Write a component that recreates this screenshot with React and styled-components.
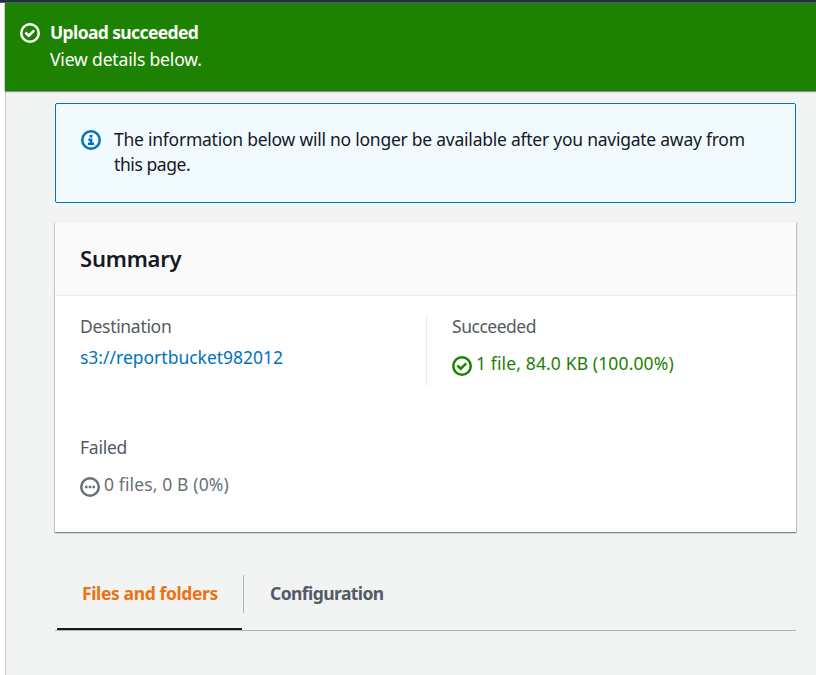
import React from "react";
import styled, { createGlobalStyle } from "styled-components";

const GlobalStyle = createGlobalStyle`
  * { box-sizing: border-box; }
  body {
    margin: 0;
    overflow: hidden;
    background: #fff;
    color: #16191f;
    font: 400 17.5px/25px "Noto Sans", "Open Sans", sans-serif;
  }
`;

const Page = styled.div`
  display: flex;
  flex-direction: column;
  height: 675px;
`;

const TopBar = styled.header`
  flex: none;
  height: 3px;
  background: #232f3e;
  border-bottom: 1px solid #545b6c;
`;

const Main = styled.main`
  flex: 1;
  margin-left: 5px;
  background: #f2f3f3;
  box-shadow: inset 1px 0 0 #c3c8cc;
`;

const Flash = styled.section`
  display: flex;
  gap: 10px;
  height: 88px;
  padding: 17px 15px;
  background: #1d8102;
  color: #fff;
  box-shadow: 0 1px 1px #879596, -1px 0 0 #d5dbdb;
`;

const FlashText = styled.div`
  display: flex;
  flex-direction: column;
  gap: 2px;
`;

const Text = styled.span`
  display: block;
  white-space: nowrap;
  letter-spacing: ${(p) => p.$track || 0}px;
  font-weight: ${(p) => (p.$bold ? 700 : 400)};
`;

const Glyph = styled.svg`
  flex: none;
  display: block;
  width: 20px;
  height: 20px;
  margin-top: ${(p) => p.$drop || 0}px;
  fill: none;
  stroke: currentColor;
`;

const Content = styled.div`
  display: flex;
  flex-direction: column;
  padding: 12px 20px 0 50px;
`;

const Notice = styled.section`
  display: flex;
  gap: 13px;
  height: 100px;
  padding: 23px 25px;
  background: #f1faff;
  border: 1px solid #0073bb;
  border-radius: 2px;
`;

const NoticeIcon = styled.span`
  color: #0073bb;
`;

const Card = styled.section`
  height: 310px;
  margin-top: 19px;
  background: #fff;
  box-shadow: 0 1px 1px #7d8a8d, 1px 1px 1px #c5cccf, -1px 1px 1px #d3d9db, 0 -1px 0 #eaeded;
`;

const CardHeader = styled.header`
  display: flex;
  align-items: center;
  height: 74px;
  padding: 0 25px 1px;
  background: #fafafa;
  border-bottom: 1px solid #eaeded;
`;

const Title = styled.h2`
  margin: 0;
  font-size: 22px;
  line-height: 28px;
  font-weight: 650;
  letter-spacing: -0.2px;
`;

const Grid = styled.div`
  display: grid;
  grid-template-columns: 371px 1fr;
  grid-template-rows: 70px 70px;
  row-gap: 51px;
  padding-top: 20px;
`;

const Field = styled.div`
  display: flex;
  flex-direction: column;
  gap: ${(p) => p.$gap}px;
  padding-left: 25px;
  border-left: 1px solid ${(p) => (p.$divided ? "#eaeded" : "transparent")};
  margin-left: ${(p) => (p.$divided ? 0 : -1)}px;
`;

const Label = styled(Text)`
  color: #545b64;
  margin-top: -2px;
`;

const Link = styled.a`
  color: #0073bb;
  white-space: nowrap;
  letter-spacing: -0.01px;
`;

const Status = styled.div`
  display: flex;
  gap: 4px;
  color: ${(p) => p.$color};
`;

const Tabs = styled.nav`
  display: flex;
  height: 84px;
  margin-top: 15px;
  border-bottom: 1px solid #aab7b8;
`;

const Tab = styled.div`
  position: relative;
  padding: 34px 26px 0 ${(p) => (p.$active ? 27 : 26)}px;
  width: ${(p) => (p.$active ? "188px" : "auto")};
  color: ${(p) => (p.$active ? "#ec7211" : "#545b64")};
`;

const ActiveLine = styled.span`
  position: absolute;
  left: 2px;
  right: 1px;
  bottom: 0;
  height: 2px;
  background: #16191f;
`;

const Separator = styled.span`
  width: 1px;
  height: 38px;
  margin-top: 28px;
  background: #aab7b8;
`;

const Ring = () => <circle cx="10" cy="10" r="8.75" strokeWidth="2.5" />;

const CheckIcon = ({ drop }) => (
  <Glyph viewBox="0 0 20 20" $drop={drop}>
    <Ring />
    <path d="M5.4 9.5 8.8 12.7 14.2 7.4" strokeWidth="2.5" />
  </Glyph>
);

const InfoIcon = ({ drop }) => (
  <Glyph viewBox="0 0 20 20" $drop={drop}>
    <Ring />
    <path d="M8.6 6.2h2.8M7.4 9.8h2.7v4M7 13.8h6" strokeWidth="2.4" />
  </Glyph>
);

const PendingIcon = ({ drop }) => (
  <Glyph viewBox="0 0 20 20" $drop={drop}>
    <Ring />
    <path d="M5 10h2.5M8.75 10h2.5M12.5 10h2.5" strokeWidth="2.5" />
  </Glyph>
);

export default function App() {
  return (
    <>
      <GlobalStyle />
      <Page>
        <TopBar />
        <Main>
          <Flash>
            <CheckIcon drop={3} />
            <FlashText>
              <Text $bold $track={-0.62}>Upload succeeded</Text>
              <Text $track={-0.16}>View details below.</Text>
            </FlashText>
          </Flash>
          <Content>
            <Notice>
              <NoticeIcon><InfoIcon drop={3} /></NoticeIcon>
              <div>
                <Text $track={-0.245}>
                  The information below will no longer be available after you navigate away from
                </Text>
                <Text $track={-0.42}>this page.</Text>
              </div>
            </Notice>
            <Card>
              <CardHeader><Title>Summary</Title></CardHeader>
              <Grid>
                <Field $gap={6}>
                  <Label $track={-0.3}>Destination</Label>
                  <Link>s3://reportbucket982012</Link>
                </Field>
                <Field $gap={12} $divided>
                  <Label $track={-0.48}>Succeeded</Label>
                  <Status $color="#1d8102">
                    <CheckIcon drop={5} />
                    <Text $track={0.13}>1 file, 84.0 KB (100.00%)</Text>
                  </Status>
                </Field>
                <Field $gap={12}>
                  <Label $track={-0.25}>Failed</Label>
                  <Status $color="#687078">
                    <PendingIcon drop={5} />
                    <Text $track={0.13}>0 files, 0 B (0%)</Text>
                  </Status>
                </Field>
              </Grid>
            </Card>
            <Tabs>
              <Tab $active>
                <Text $bold $track={-0.38}>Files and folders</Text>
                <ActiveLine />
              </Tab>
              <Separator />
              <Tab>
                <Text $bold $track={-0.57}>Configuration</Text>
              </Tab>
            </Tabs>
          </Content>
        </Main>
      </Page>
    </>
  );
}
